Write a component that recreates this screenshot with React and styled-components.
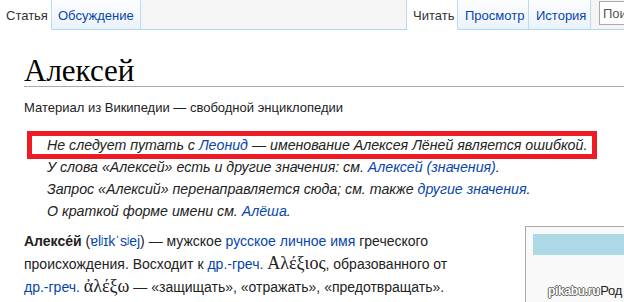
import React from 'react'
import styled, { createGlobalStyle } from 'styled-components';

const Global = createGlobalStyle`
  body {
    margin: 0;
    background: #fff;
    font-family: "Liberation Sans", Arial, sans-serif;
    color: #222;
  }
`;

const Page = styled.div`
  width: 624px;
  height: 302px;
  overflow: hidden;
  position: relative;
  background: #fff;
`;

const Header = styled.div`
  display: flex;
  height: 30px;
`;

const Tab = styled.div`
  flex-shrink: 0;
  box-sizing: border-box;
  width: ${p => p.$w}px;
  height: 30px;
  padding: 8px 0 0 ${p => p.$left || 6}px;
  font-size: 13px;
  line-height: 16px;
  white-space: nowrap;
  color: ${p => (p.$selected ? '#333' : '#0645ad')};
  background: ${p => (p.$selected ? '#fff' : 'linear-gradient(to bottom, #fcfdfe 0%, #f1f6fb 70%, #e8f2f8 100%)')};
  border-bottom: 1px solid ${p => (p.$selected ? '#fff' : '#a7d7f9')};
  border-right: 1px solid #b9dcf4;
`;

const Spacer = styled.div`
  flex: 1;
  height: 30px;
  box-sizing: border-box;
  background: #f5f5f5;
  border-bottom: 1px solid #a7d7f9;
  border-right: 1px solid #b9dcf4;
`;

const SearchArea = styled.div`
  flex-shrink: 0;
  width: 33px;
  height: 30px;
  box-sizing: border-box;
  padding: 1px 0 0 8px;
  background: #f5f5f5;
  border-bottom: 1px solid #a7d7f9;
  overflow: hidden;
`;

const SearchBox = styled.div`
  box-sizing: border-box;
  height: 24px;
  width: 60px;
  border: 1px solid #aaa;
  background: #fff;
  padding: 4px 0 0 3px;
  font-size: 13px;
  line-height: 16px;
  color: #555;
  white-space: nowrap;
`;

const Content = styled.div`
  padding-left: 24px;
`;

const Heading = styled.h1`
  margin: 25px 0 0;
  font-family: "Liberation Serif", "Times New Roman", serif;
  font-weight: normal;
  font-size: 31px;
  line-height: 31px;
  color: #000;
  border-bottom: 1px solid #aaa;
`;

const SiteSub = styled.div`
  margin-top: 12px;
  font-size: 13px;
  line-height: 18px;
  color: #222;
`;

const Hatnotes = styled.div`
  margin-top: 17px;
  font-style: italic;
  font-size: 14.2px;
  line-height: 22px;
  color: #222;
`;

const Hatnote = styled.div`
  padding-left: 23px;
  white-space: nowrap;
`;

const Marked = styled.div`
  margin: -3px 0 -3px 3px;
  width: 570px;
  box-sizing: border-box;
  border: 5px solid #ed1c24;
  padding-left: 15px;
  line-height: 18px;
  white-space: nowrap;
`;

const Link = styled.span`
  color: #0645ad;
`;

const Greek = styled.span`
  font-family: "Liberation Serif", "Times New Roman", serif;
  font-size: 18px;
  line-height: 0;
`;

const BodyRow = styled.div`
  display: flex;
  margin-top: 4px;
`;

const Paragraph = styled.p`
  margin: 4px 0 0;
  width: 501px;
  flex-shrink: 0;
  font-size: 14px;
  line-height: 23px;
  color: #222;
  white-space: nowrap;
`;

const Infobox = styled.div`
  flex-shrink: 0;
  width: 140px;
  height: 90px;
  box-sizing: border-box;
  border: 1px solid #aaa;
  background: #f9f9f9;
  padding: 7px;
`;

const InfoHead = styled.div`
  height: 21px;
  background: #add8e6;
`;

const Watermark = styled.div`
  position: absolute;
  right: 2px;
  bottom: 4px;
  font-size: 12px;
  font-weight: bold;
  color: #fff;
  letter-spacing: -0.3px;
  text-shadow: -1px 0 #666, 1px 0 #666, 0 -1px #666, 0 1px #666;
`;

const Peek = styled.span`
  color: #222;
  text-shadow: none;
  font-weight: normal;
  font-size: 13px;
  margin-left: 1px;
`;

const App = () => {
  return (
    <Page>
      <Global />
      <Header>
        <Tab $selected $w={52}>Статья</Tab>
        <Tab $w={89}>Обсуждение</Tab>
        <Spacer />
        <Tab $selected $w={51}>Читать</Tab>
        <Tab $w={71} $left={7}>Просмотр</Tab>
        <Tab $w={62} $left={7}>История</Tab>
        <SearchArea>
          <SearchBox>Поиск</SearchBox>
        </SearchArea>
      </Header>
      <Content>
        <Heading>Алексей</Heading>
        <SiteSub>Материал из Википедии — свободной энциклопедии</SiteSub>
        <Hatnotes>
          <Marked>
            Не следует путать с <Link>Леонид</Link> — именование Алексея Лёней является ошибкой.
          </Marked>
          <Hatnote>
            У слова «Алексей» есть и другие значения: см. <Link>Алексей (значения)</Link>.
          </Hatnote>
          <Hatnote>
            Запрос «Алексий» перенаправляется сюда; см. также <Link>другие значения</Link>.
          </Hatnote>
          <Hatnote>
            О краткой форме имени см. <Link>Алёша</Link>.
          </Hatnote>
        </Hatnotes>
        <BodyRow>
          <Paragraph>
            <b>Алексе́й</b> (<Link>ɐlʲɪkˈsʲej</Link>) — мужское <Link>русское личное имя</Link> греческого
            <br />
            происхождения. Восходит к <Link>др.-греч.</Link> <Greek>Αλέξιος</Greek>, образованного от
            <br />
            <Link>др.-греч.</Link> <Greek>ἀλέξω</Greek> — «защищать», «отражать», «предотвращать».
          </Paragraph>
          <Infobox>
            <InfoHead />
          </Infobox>
        </BodyRow>
      </Content>
      <Watermark>pikabu.ru<Peek>Род</Peek></Watermark>
    </Page>
  )
}

export default App
